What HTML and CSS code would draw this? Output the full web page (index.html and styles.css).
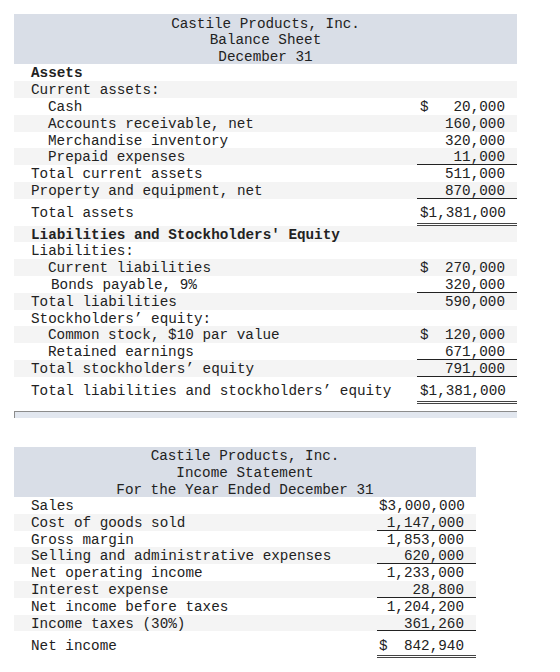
FILE: index.html
```html
<!DOCTYPE html>
<html>
<head>
<meta charset="utf-8">
<link rel="stylesheet" href="styles.css">
</head>
<body>
<div class="page">
  <div class="stmt stmt-bs">
    <div class="head">
      <div>Castile Products, Inc.</div>
      <div>Balance Sheet</div>
      <div>December 31</div>
    </div>
    <div class="row"><div class="lbl bold">Assets</div><div class="num"></div></div>
    <div class="row alt"><div class="lbl">Current assets:</div><div class="num"></div></div>
    <div class="row"><div class="lbl ind">Cash</div><div class="num"><span>$</span><span>20,000</span></div></div>
    <div class="row alt"><div class="lbl ind">Accounts receivable, net</div><div class="num"><span>160,000</span></div></div>
    <div class="row"><div class="lbl ind">Merchandise inventory</div><div class="num"><span>320,000</span></div></div>
    <div class="row alt"><div class="lbl ind">Prepaid expenses</div><div class="num ul"><span>11,000</span></div></div>
    <div class="row"><div class="lbl">Total current assets</div><div class="num"><span>511,000</span></div></div>
    <div class="row alt"><div class="lbl">Property and equipment, net</div><div class="num ul"><span>870,000</span></div></div>
    <div class="row tall"><div class="lbl">Total assets</div><div class="num dbl"><span>$1,381,000</span></div></div>
    <div class="row alt"><div class="lbl bold">Liabilities and Stockholders' Equity</div><div class="num"></div></div>
    <div class="row"><div class="lbl">Liabilities:</div><div class="num"></div></div>
    <div class="row alt"><div class="lbl ind">Current liabilities</div><div class="num"><span>$</span><span>270,000</span></div></div>
    <div class="row"><div class="lbl ind2">Bonds payable, 9%</div><div class="num ul"><span>320,000</span></div></div>
    <div class="row alt"><div class="lbl">Total liabilities</div><div class="num"><span>590,000</span></div></div>
    <div class="row"><div class="lbl">Stockholders’ equity:</div><div class="num"></div></div>
    <div class="row alt"><div class="lbl ind">Common stock, $10 par value</div><div class="num"><span>$</span><span>120,000</span></div></div>
    <div class="row"><div class="lbl ind">Retained earnings</div><div class="num ul"><span>671,000</span></div></div>
    <div class="row alt"><div class="lbl">Total stockholders’ equity</div><div class="num ul"><span>791,000</span></div></div>
    <div class="row tall"><div class="lbl">Total liabilities and stockholders’ equity</div><div class="num dbl"><span>$1,381,000</span></div></div>
  </div>
  <div class="scrollbar"></div>

  <div class="stmt stmt-is">
    <div class="head">
      <div>Castile Products, Inc.</div>
      <div>Income Statement</div>
      <div>For the Year Ended December 31</div>
    </div>
    <div class="row"><div class="lbl">Sales</div><div class="num"><span>$3,000,000</span></div></div>
    <div class="row alt"><div class="lbl">Cost of goods sold</div><div class="num ul"><span>1,147,000</span></div></div>
    <div class="row"><div class="lbl">Gross margin</div><div class="num"><span>1,853,000</span></div></div>
    <div class="row alt"><div class="lbl">Selling and administrative expenses</div><div class="num ul"><span>620,000</span></div></div>
    <div class="row"><div class="lbl">Net operating income</div><div class="num"><span>1,233,000</span></div></div>
    <div class="row alt"><div class="lbl">Interest expense</div><div class="num ul"><span>28,800</span></div></div>
    <div class="row"><div class="lbl">Net income before taxes</div><div class="num"><span>1,204,200</span></div></div>
    <div class="row alt"><div class="lbl">Income taxes (30%)</div><div class="num ul"><span>361,260</span></div></div>
    <div class="row tall"><div class="lbl">Net income</div><div class="num dbl"><span>$</span><span>842,940</span></div></div>
  </div>
</div>
</body>
</html>
```

FILE: styles.css
```css
html, body {
  margin: 0;
  padding: 0;
  background: #ffffff;
}

.page {
  padding: 14px 0 0 14px;
  font-family: "Liberation Mono", "DejaVu Sans Mono", monospace;
  font-size: 14.3px;
  color: #222222;
}

.stmt {
  display: flex;
  flex-direction: column;
}

.stmt-bs {
  width: 503px;
}

.stmt-is {
  width: 462px;
  margin-top: 29px;
}

.head {
  background: #d9dee7;
  text-align: center;
  line-height: 16.8px;
  box-sizing: border-box;
  height: 50.4px;
  padding-top: 1.5px;
}

.row {
  display: grid;
  height: 16.8px;
}

.stmt-bs .row {
  grid-template-columns: 1fr 100px;
}

.stmt-is .row {
  grid-template-columns: 1fr 99px;
}

.row.alt {
  background: #f4f4f4;
}

.row.tall {
  height: 26.8px;
}

.lbl,
.num {
  box-sizing: border-box;
  height: 16.8px;
  line-height: 16.8px;
  padding-top: 1px;
}

.row.tall .lbl,
.row.tall .num {
  height: 26.8px;
  padding-top: 6.5px;
}

.lbl {
  padding-left: 17px;
  white-space: nowrap;
}

.lbl.ind {
  padding-left: 34px;
}

.lbl.ind2 {
  padding-left: 37px;
}

.bold {
  font-weight: bold;
}

.num {
  display: flex;
  justify-content: space-between;
  padding-left: 3px;
  padding-right: 12px;
  white-space: pre;
}

.stmt-is .num {
  padding-left: 2px;
}

.num span:only-child {
  margin-left: auto;
}

.num.ul {
  box-shadow: inset 0 -1px 0 #222222;
}

.num.dbl {
  border-bottom: 3px double #444444;
}

.scrollbar {
  width: 502px;
  height: 6px;
  margin-top: 7px;
  background: #e2e7ef;
  border-top: 1px solid #8c8c8c;
  border-left: 1px solid #8c8c8c;
}
```
